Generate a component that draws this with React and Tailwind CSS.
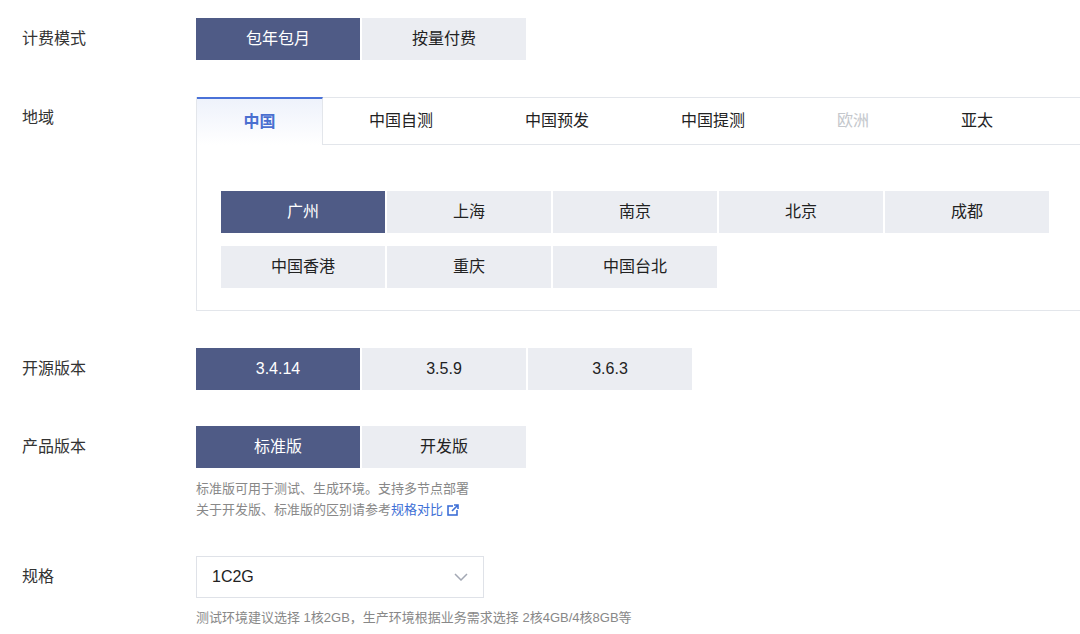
const font = { fontFamily: '"Liberation Sans", "Noto Sans CJK SC", sans-serif' };

const Btn = ({ active, children }) => (
  <div
    className={`w-[164px] h-[42px] flex items-center justify-center text-[16px] ${
      active ? 'bg-[#4f5b86] text-white' : 'bg-[#ebedf2] text-[#222]'
    }`}
  >
    {children}
  </div>
);

const Row = ({ label, children, className = '' }) => (
  <div className={`flex ${className}`}>
    <div className="w-[196px] pl-[22px] text-[16px] text-[#333] leading-[42px] shrink-0">{label}</div>
    <div className="flex-1">{children}</div>
  </div>
);

const tabs = ['中国', '中国自测', '中国预发', '中国提测', '欧洲', '亚太'];

export default function App() {
  return (
    <div className="w-[1080px] h-[634px] bg-white overflow-hidden pt-[18px]" style={font}>
      <Row label="计费模式">
        <div className="flex gap-[2px]">
          <Btn active>包年包月</Btn>
          <Btn>按量付费</Btn>
        </div>
      </Row>

      <Row label="地域" className="mt-[37px]">
        <div className="border border-[#e3e6eb] border-r-0 h-[214px]">
          <div className="flex h-[47px] border-b border-[#e3e6eb]">
            {tabs.map((t, i) => (
              <div
                key={t}
                className={`px-[46px] flex items-center text-[16px] ${
                  i === 0
                    ? 'w-[126px] justify-center border-t-2 border-[#4a72d8] border-r border-r-[#e3e6eb] bg-gradient-to-b from-[#eef2fb] to-white text-[#4a6fd0] font-bold -mb-px mt-[-1px] h-[48px]'
                    : i === 4
                    ? 'text-[#c4c7cc]'
                    : 'text-[#222]'
                }`}
              >
                {t}
              </div>
            ))}
          </div>
          <div className="pl-[24px] pt-[46px] grid grid-cols-[repeat(5,164px)] gap-x-[2px] gap-y-[13px]">
            {['广州', '上海', '南京', '北京', '成都', '中国香港', '重庆', '中国台北'].map((c, i) => (
              <Btn key={c} active={i === 0}>{c}</Btn>
            ))}
          </div>
        </div>
      </Row>

      <Row label="开源版本" className="mt-[37px]">
        <div className="flex gap-[2px]">
          <Btn active>3.4.14</Btn>
          <Btn>3.5.9</Btn>
          <Btn>3.6.3</Btn>
        </div>
      </Row>

      <Row label="产品版本" className="mt-[36px]">
        <div className="flex gap-[2px]">
          <Btn active>标准版</Btn>
          <Btn>开发版</Btn>
        </div>
        <div className="mt-[10px] text-[13px] leading-[21px] text-[#888]">
          <div>标准版可用于测试、生成环境。支持多节点部署</div>
          <div className="flex items-center">
            关于开发版、标准版的区别请参考<span className="text-[#3d6fd6]">规格对比</span>
            <svg width="12" height="12" viewBox="0 0 12 12" className="ml-[4px]">
              <rect x="1" y="2" width="9" height="9" fill="none" stroke="#3d6fd6" strokeWidth="1.6" />
              <rect x="6" y="0" width="6" height="6" fill="white" />
              <path d="M5 7 L11 1 M7 1 H11 V5" stroke="#3d6fd6" strokeWidth="1.6" fill="none" />
            </svg>
          </div>
        </div>
      </Row>

      <Row label="规格" className="mt-[36px]">
        <div className="w-[288px] h-[42px] border border-[#dfe2e8] flex items-center justify-between px-[15px] text-[16px] text-[#222]">
          1C2G
          <svg width="14" height="8" viewBox="0 0 14 8">
            <path d="M1 1 L7 7 L13 1" stroke="#a3a8b4" strokeWidth="1.5" fill="none" />
          </svg>
        </div>
        <div className="mt-[10px] text-[13px] text-[#888]">
          测试环境建议选择 1核2GB，生产环境根据业务需求选择 2核4GB/4核8GB等
        </div>
      </Row>
    </div>
  );
}
